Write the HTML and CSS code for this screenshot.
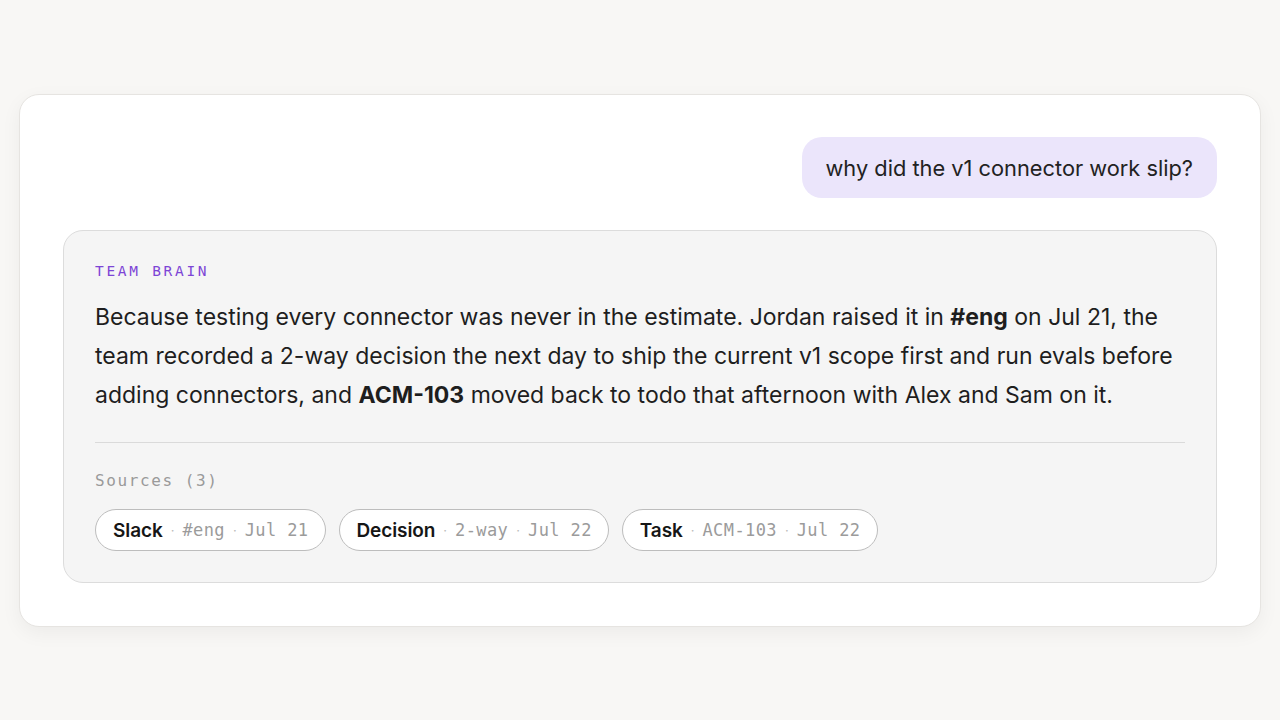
FILE: index.html
```html
<!DOCTYPE html>
<html>
<head>
<meta charset="utf-8">
<link rel="stylesheet" href="styles.css">
</head>
<body>
<main class="stage">
  <section class="card">
    <div class="user-row">
      <div class="bubble">why did the v1 connector work slip?</div>
    </div>
    <div class="answer">
      <div class="label">TEAM BRAIN</div>
      <p class="body">Because testing every connector was never in the estimate. Jordan raised it in <b>#eng</b> on Jul 21, the team recorded a 2-way decision the next day to ship the current v1 scope first and run evals before adding connectors, and <b>ACM-103</b> moved back to todo that afternoon with Alex and Sam on it.</p>
      <hr class="divider">
      <div class="sources-title">Sources (3)</div>
      <div class="pills">
        <span class="pill"><b>Slack</b><i>·</i><span class="meta">#eng</span><i>·</i><span class="meta">Jul 21</span></span>
        <span class="pill"><b>Decision</b><i>·</i><span class="meta">2-way</span><i>·</i><span class="meta">Jul 22</span></span>
        <span class="pill"><b>Task</b><i>·</i><span class="meta">ACM-103</span><i>·</i><span class="meta">Jul 22</span></span>
      </div>
    </div>
  </section>
</main>
</body>
</html>
```
FILE: styles.css
```css
* { box-sizing: border-box; }
html, body { margin: 0; padding: 0; }
body {
  background: #f8f7f5;
  font-family: Inter, "Noto Sans", sans-serif;
  color: #1b1b1b;
  width: 1280px;
  height: 720px;
  overflow: hidden;
}
.stage {
  padding: 94px 19px 0 19px;
}
.card {
  background: #fff;
  border: 1px solid #e6e4e1;
  border-radius: 20px;
  box-shadow: 0 6px 20px rgba(0,0,0,0.05);
  padding: 42px 43px 43px 43px;
  display: flex;
  flex-direction: column;
  gap: 32px;
}
.user-row {
  display: flex;
  justify-content: flex-end;
}
.bubble {
  background: #ebe5fb;
  color: #222;
  border-radius: 20px;
  padding: 0 24px;
  height: 61px;
  display: flex;
  align-items: center;
  font-size: 21.8px;
}
.answer {
  background: #f5f5f5;
  border: 1px solid #dcdcdc;
  border-radius: 20px;
  padding: 31px 31px 31px 31px;
}
.label {
  font-family: "DejaVu Sans Mono", monospace;
  font-size: 14.5px;
  letter-spacing: 2.7px;
  color: #7d45d6;
  line-height: 18px;
}
.body {
  margin: 18px 0 0 0;
  font-size: 23px;
  line-height: 39px;
  color: #1e1e1e;
}
.body b { font-weight: 700; }
.divider {
  border: 0;
  border-top: 1px solid #dadada;
  margin: 27px 0 0 0;
}
.sources-title {
  margin-top: 28px;
  font-family: "DejaVu Sans Mono", monospace;
  font-size: 16px;
  letter-spacing: 1.6px;
  color: #9a9a9a;
  line-height: 20px;
}
.pills {
  margin-top: 18px;
  display: flex;
  gap: 13px;
}
.pill {
  display: inline-flex;
  align-items: center;
  height: 42px;
  padding: 0 16px 0 17px;
  border: 1px solid #bdbdbd;
  border-radius: 21px;
  background: #fff;
}
.pill b {
  font-size: 19px;
  font-weight: 600;
  color: #161616;
  letter-spacing: -0.1px;
}
.pill i {
  font-style: normal;
  color: #bbb;
  font-size: 13px;
  margin: 0 8px;
}
.pill .meta {
  font-family: "DejaVu Sans Mono", monospace;
  font-size: 17px;
  letter-spacing: 0.4px;
  color: #9b9b9b;
}
```
